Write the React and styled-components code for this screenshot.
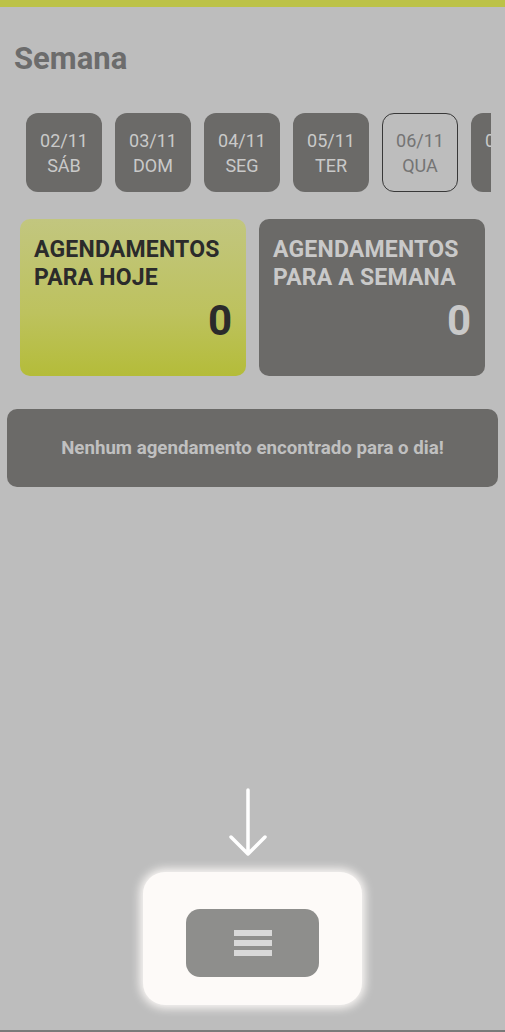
import styled, { createGlobalStyle } from "styled-components";

const GlobalStyle = createGlobalStyle`
  html, body {
    margin: 0;
    padding: 0;
    background: #bdbdbd;
    font-family: Roboto, "Liberation Sans", sans-serif;
  }
`;

const Screen = styled.div`
  width: 505px;
  height: 1032px;
  display: flex;
  flex-direction: column;
  background: #bdbdbd;
  overflow: hidden;
  border-bottom: 2px solid #7a7a7a;
  box-sizing: border-box;
`;

const TopBar = styled.div`
  height: 7px;
  background: #bcc247;
  flex-shrink: 0;
`;

const Title = styled.h1`
  margin: 35px 0 0 14px;
  font-size: 31px;
  line-height: 33px;
  font-weight: 700;
  color: #6c6c6c;
`;

const DaysRow = styled.div`
  margin: 38px 0 0 26px;
  width: 465px;
  display: flex;
  gap: 13px;
  overflow: hidden;
`;

const Day = styled.div`
  flex-shrink: 0;
  width: 76px;
  height: 79px;
  box-sizing: border-box;
  border-radius: 12px;
  background: ${(p) => (p.$active ? "transparent" : "#6b6a68")};
  border: ${(p) => (p.$active ? "1.5px solid #383838" : "none")};
  color: ${(p) => (p.$active ? "#747474" : "#c9c9c9")};
  display: flex;
  flex-direction: column;
  align-items: center;
  justify-content: center;
  font-size: 18px;
  line-height: 25px;
`;

const Cards = styled.div`
  margin: 27px 20px 0 20px;
  display: grid;
  grid-template-columns: 1fr 1fr;
  gap: 13px;
`;

const Card = styled.div`
  height: 157px;
  border-radius: 10px;
  box-sizing: border-box;
  padding: 17px 14px 0 14px;
  display: flex;
  flex-direction: column;
  background: ${(p) =>
    p.$today ? "linear-gradient(180deg, #c2c67f 0%, #bdc25e 60%, #b4bc39 100%)" : "#6b6a68"};
  color: ${(p) => (p.$today ? "#2b2b2b" : "#c9c9c9")};
`;

const CardTitle = styled.div`
  font-size: 23px;
  line-height: 28px;
  font-weight: 700;
  letter-spacing: 0.2px;
`;

const CardCount = styled.div`
  align-self: flex-end;
  font-size: 42px;
  line-height: 46px;
  font-weight: 700;
  margin-top: 6px;
`;

const Message = styled.div`
  margin: 33px 7px 0 7px;
  height: 78px;
  border-radius: 10px;
  background: #6b6a68;
  color: #c0c0c0;
  font-size: 18.7px;
  font-weight: 700;
  display: flex;
  align-items: center;
  justify-content: center;
`;

const Spacer = styled.div`
  flex: 1;
`;

const Hint = styled.div`
  display: flex;
  flex-direction: column;
  align-items: center;
  padding-bottom: 25px;
`;

const Arrow = styled.svg`
  margin-right: 9px;
`;

const Glow = styled.div`
  margin-top: 14px;
  width: 219px;
  height: 133px;
  border-radius: 22px;
  background: #fdfaf8;
  box-shadow: 0 0 10px 3px #fdfaf8;
  display: flex;
  align-items: center;
  justify-content: center;
`;

const MenuButton = styled.button`
  width: 133px;
  height: 68px;
  border: none;
  border-radius: 14px;
  background: #8e8e8c;
  display: flex;
  flex-direction: column;
  align-items: center;
  justify-content: center;
  gap: 4px;
  margin-top: 8px;
  cursor: pointer;
`;

const Bar = styled.span`
  display: block;
  width: 38px;
  height: 6px;
  background: #d8d8d8;
`;

const days = [
  ["02/11", "SÁB"],
  ["03/11", "DOM"],
  ["04/11", "SEG"],
  ["05/11", "TER"],
  ["06/11", "QUA"],
  ["07/11", "QUI"],
];

export default function App() {
  return (
    <>
      <GlobalStyle />
      <Screen>
        <TopBar />
        <Title>Semana</Title>
        <DaysRow>
          {days.map(([d, w], i) => (
            <Day key={d} $active={i === 4}>
              <span>{d}</span>
              <span>{w}</span>
            </Day>
          ))}
        </DaysRow>
        <Cards>
          <Card $today>
            <CardTitle>
              AGENDAMENTOS
              <br />
              PARA HOJE
            </CardTitle>
            <CardCount>0</CardCount>
          </Card>
          <Card>
            <CardTitle>
              AGENDAMENTOS
              <br />
              PARA A SEMANA
            </CardTitle>
            <CardCount>0</CardCount>
          </Card>
        </Cards>
        <Message>Nenhum agendamento encontrado para o dia!</Message>
        <Spacer />
        <Hint>
          <Arrow width="40" height="70" viewBox="0 0 40 70">
            <path
              d="M20 2 V66 M3 49 L20 66 L37 49"
              fill="none"
              stroke="#ffffff"
              strokeWidth="3.5"
              strokeLinecap="round"
              strokeLinejoin="round"
            />
          </Arrow>
          <Glow>
            <MenuButton aria-label="menu">
              <Bar />
              <Bar />
              <Bar />
            </MenuButton>
          </Glow>
        </Hint>
      </Screen>
    </>
  );
}
